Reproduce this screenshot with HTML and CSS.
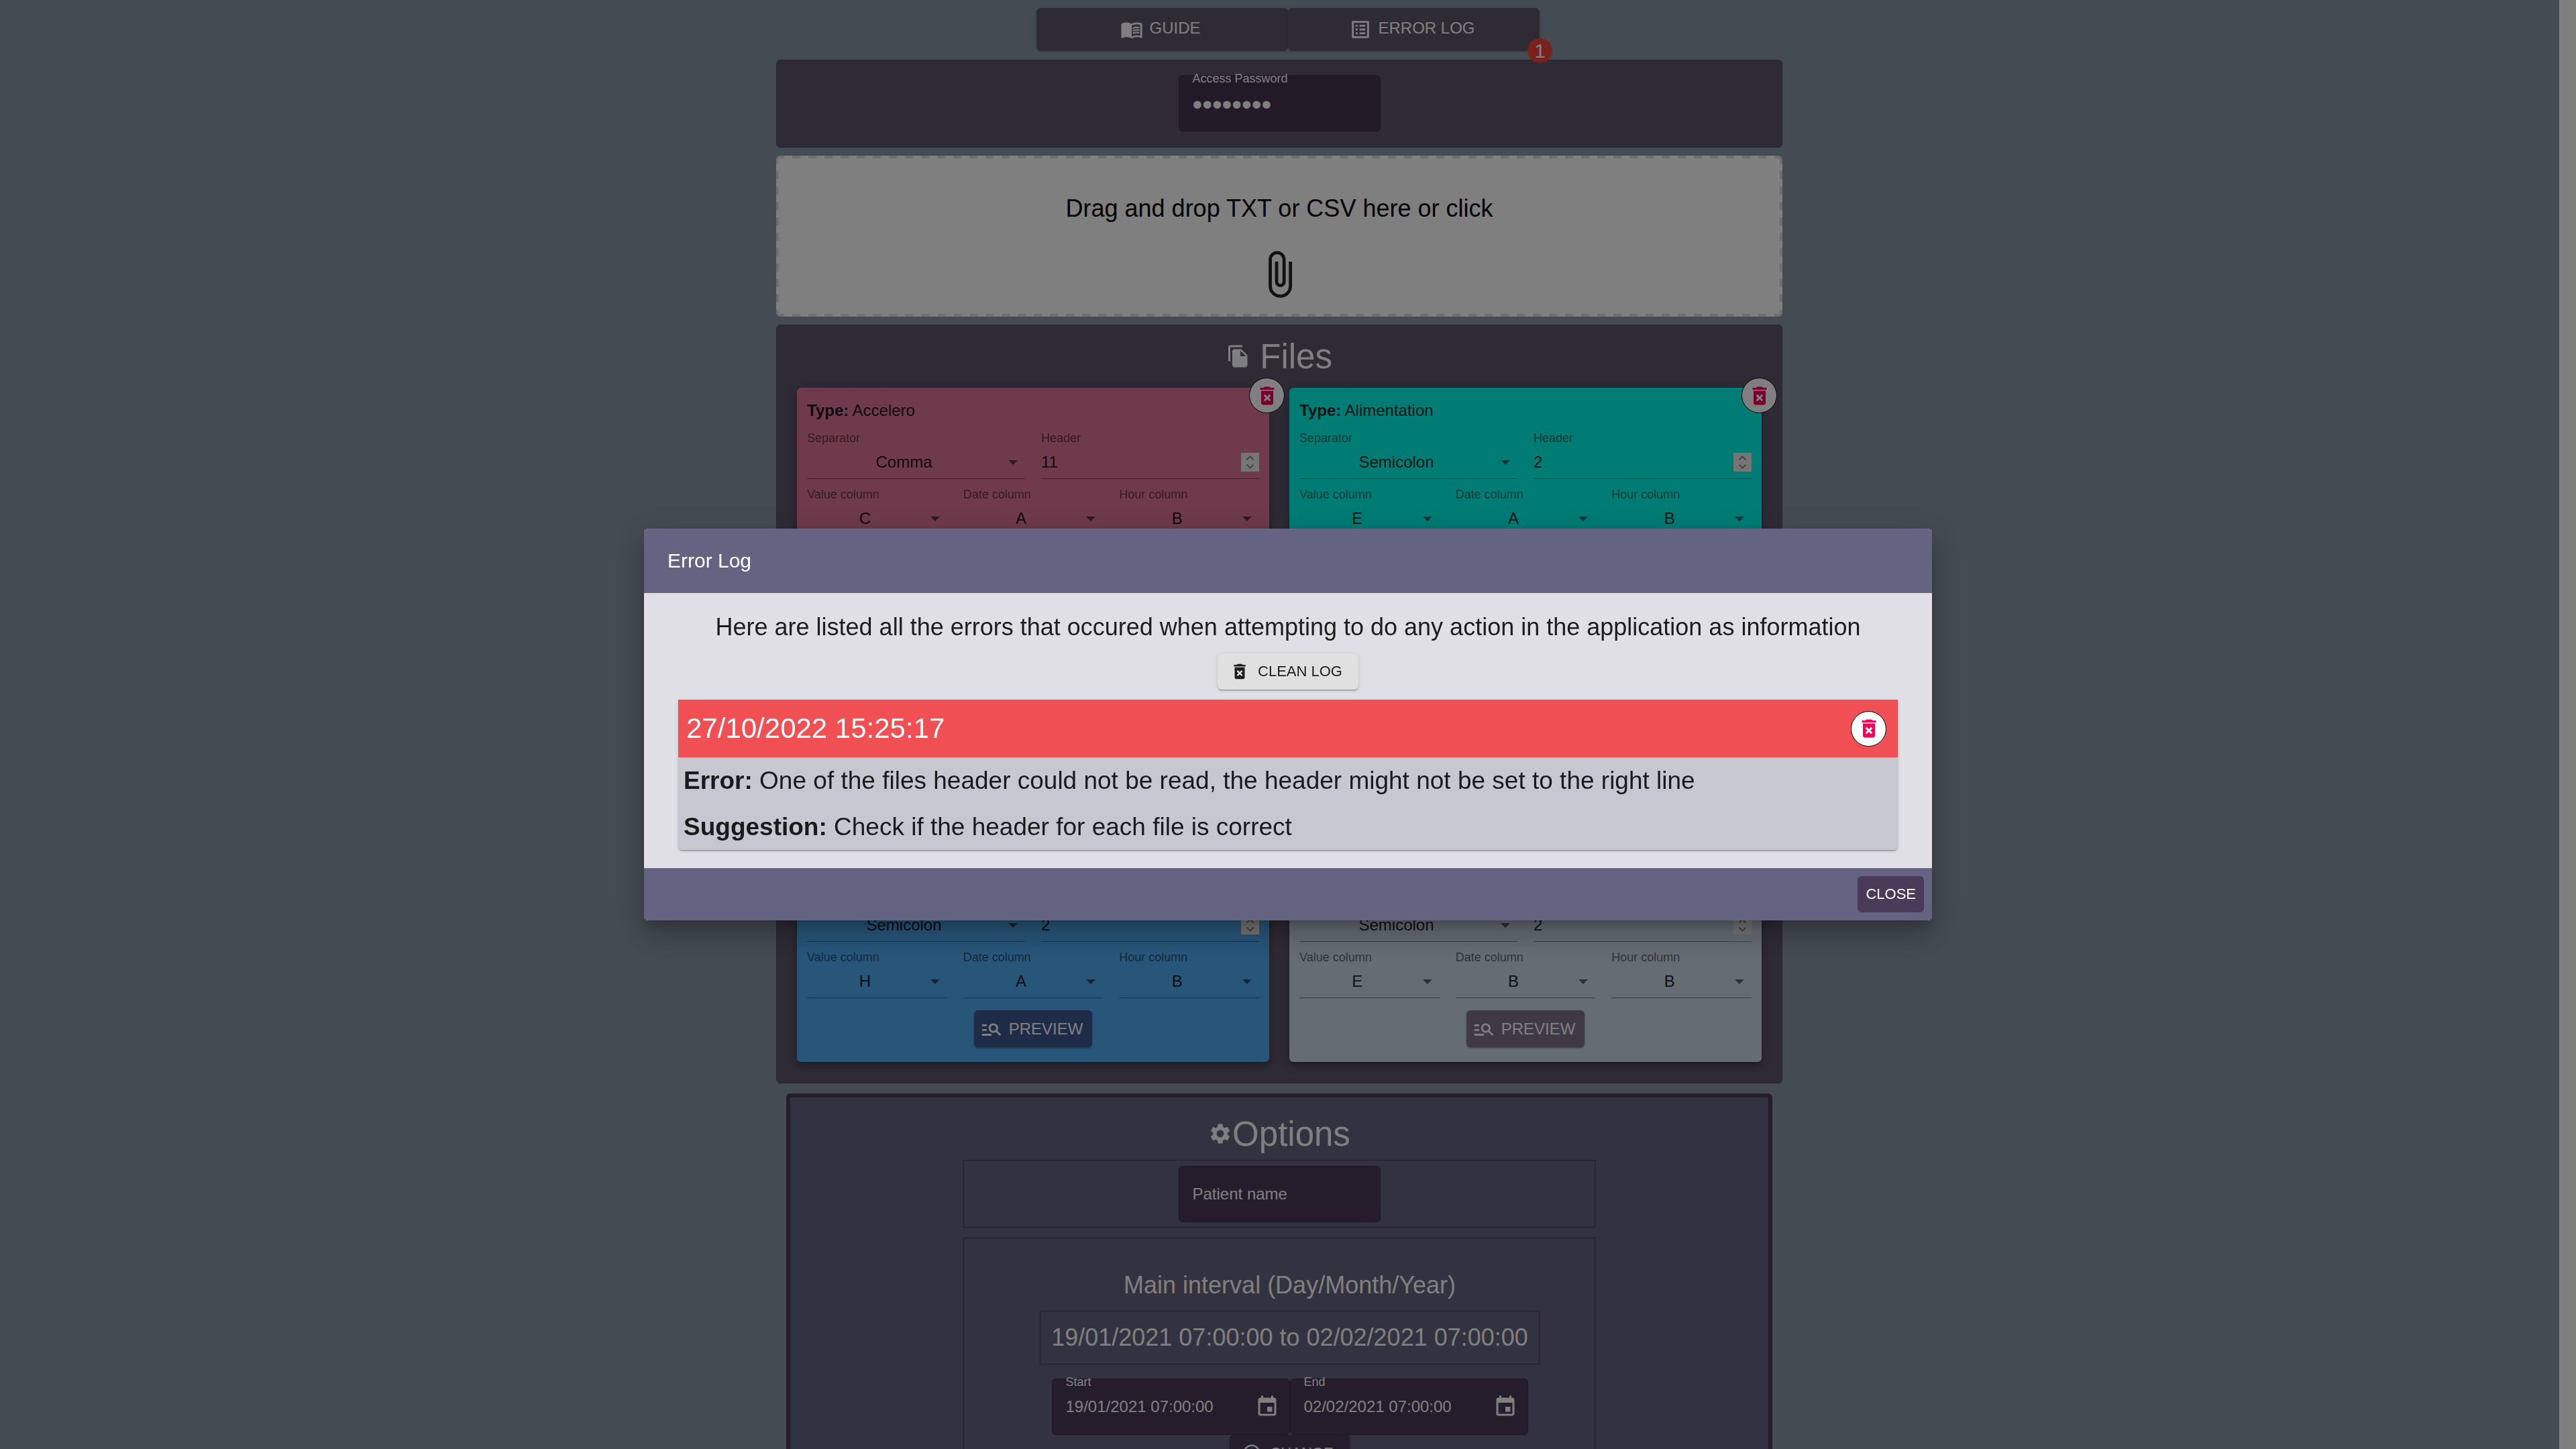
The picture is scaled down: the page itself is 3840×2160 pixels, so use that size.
FILE: index.html
```html
<!DOCTYPE html>
<html lang="en">
<head>
<meta charset="utf-8">
<title>Error Log</title>
<link rel="stylesheet" href="styles.css">
</head>
<body>
<svg class="sprite" aria-hidden="true">
  <symbol id="i-book" viewBox="0 0 24 24"><path d="M21 5c-1.11-.35-2.33-.5-3.5-.5-1.95 0-4.05.4-5.5 1.5-1.45-1.1-3.55-1.5-5.5-1.5S2.45 4.9 1 6v14.65c0 .25.25.5.5.5.1 0 .15-.05.25-.05C3.1 20.45 5.05 20 6.5 20c1.95 0 4.05.4 5.5 1.5 1.35-.85 3.8-1.5 5.5-1.5 1.65 0 3.35.3 4.75 1.05.1.05.15.05.25.05.25 0 .5-.25.5-.5V6c-.6-.45-1.25-.75-2-1zm0 13.5c-1.1-.35-2.3-.5-3.5-.5-1.7 0-4.15.65-5.5 1.5V8c1.35-.85 3.8-1.5 5.5-1.5 1.2 0 2.4.15 3.5.5v11.5z"/><path d="M17.5 10.5c.88 0 1.73.09 2.5.26V9.24c-.79-.15-1.64-.24-2.5-.24-1.7 0-3.24.29-4.5.83v1.66c1.13-.64 2.7-.99 4.5-.99zM13 12.49v1.66c1.13-.64 2.7-.99 4.5-.99.88 0 1.73.09 2.5.26V11.9c-.79-.15-1.64-.24-2.5-.24-1.7 0-3.24.3-4.5.83zm4.5 1.84c-1.7 0-3.24.29-4.5.83v1.66c1.13-.64 2.7-.99 4.5-.99.88 0 1.73.09 2.5.26v-1.52c-.79-.16-1.64-.24-2.5-.24z"/></symbol>
  <symbol id="i-list" viewBox="0 0 24 24"><path d="M19 5v14H5V5h14m1.1-2H3.9c-.5 0-.9.4-.9.9v16.2c0 .4.4.9.9.9h16.2c.4 0 .9-.5.9-.9V3.9c0-.5-.5-.9-.9-.9zM11 7h6v2h-6V7zm0 4h6v2h-6v-2zm0 4h6v2h-6zM7 7h2v2H7zm0 4h2v2H7zm0 4h2v2H7z"/></symbol>
  <symbol id="i-clip" viewBox="0 0 24 24"><path d="M16.5 6v11.5c0 2.21-1.79 4-4 4s-4-1.79-4-4V5c0-1.38 1.12-2.5 2.5-2.5s2.5 1.12 2.5 2.5v10.5c0 .55-.45 1-1 1s-1-.45-1-1V6H10v9.5c0 1.38 1.12 2.5 2.5 2.5s2.5-1.12 2.5-2.5V5c0-2.21-1.79-4-4-4S7 2.79 7 5v12.5c0 3.04 2.46 5.5 5.5 5.5s5.5-2.46 5.5-5.5V6h-1.5z"/></symbol>
  <symbol id="i-copy" viewBox="0 0 24 24"><path d="M16 1H4c-1.1 0-2 .9-2 2v14h2V3h12V1zm-1 4l6 6v10c0 1.1-.9 2-2 2H7.99C6.89 23 6 22.1 6 21l.01-14c0-1.1.89-2 1.99-2h7zm-1 7h5.5L14 6.5V12z"/></symbol>
  <symbol id="i-trash" viewBox="0 0 24 24"><path d="M6 19c0 1.1.9 2 2 2h8c1.1 0 2-.9 2-2V7H6v12zm2.46-7.12l1.41-1.41L12 12.59l2.12-2.12 1.41 1.41L13.41 14l2.12 2.12-1.41 1.41L12 15.41l-2.12 2.12-1.41-1.41L10.59 14l-2.13-2.12zM15.5 4l-1-1h-5l-1 1H5v2h14V4z"/></symbol>
  <symbol id="i-search" viewBox="0 0 24 24"><path d="M7 9H2V7h5v2zm0 3H2v2h5v-2zm13.59 7l-3.83-3.83c-.8.52-1.74.83-2.76.83-2.76 0-5-2.24-5-5s2.24-5 5-5 5 2.24 5 5c0 1.02-.31 1.96-.83 2.75L22 17.59 20.59 19zM17 11c0-1.65-1.35-3-3-3s-3 1.35-3 3 1.35 3 3 3 3-1.35 3-3zM2 19h10v-2H2v2z"/></symbol>
  <symbol id="i-gear" viewBox="0 0 24 24"><path d="M19.14 12.94c.04-.3.06-.61.06-.94 0-.32-.02-.64-.07-.94l2.03-1.58c.18-.14.23-.41.12-.61l-1.92-3.32c-.12-.22-.37-.29-.59-.22l-2.39.96c-.5-.38-1.03-.7-1.62-.94l-.36-2.54c-.04-.24-.24-.41-.48-.41h-3.84c-.24 0-.43.17-.47.41l-.36 2.54c-.59.24-1.13.57-1.62.94l-2.39-.96c-.22-.08-.47 0-.59.22L2.74 8.87c-.12.21-.08.47.12.61l2.03 1.58c-.05.3-.09.63-.09.94s.02.64.07.94l-2.03 1.58c-.18.14-.23.41-.12.61l1.92 3.32c.12.22.37.29.59.22l2.39-.96c.5.38 1.03.7 1.62.94l.36 2.54c.05.24.24.41.48.41h3.84c.24 0 .44-.17.47-.41l.36-2.54c.59-.24 1.13-.56 1.62-.94l2.39.96c.22.08.47 0 .59-.22l1.92-3.32c.12-.22.07-.47-.12-.61l-2.01-1.58zM12 15.6c-1.98 0-3.6-1.62-3.6-3.6s1.62-3.6 3.6-3.6 3.6 1.62 3.6 3.6-1.62 3.6-3.6 3.6z"/></symbol>
  <symbol id="i-event" viewBox="0 0 24 24"><path d="M17 12h-5v5h5v-5zM16 1v2H8V1H6v2H5c-1.11 0-1.99.9-1.99 2L3 19c0 1.1.89 2 2 2h14c1.1 0 2-.9 2-2V5c0-1.1-.9-2-2-2h-1V1h-2zm3 18H5V8h14v11z"/></symbol>
  <symbol id="i-clock" viewBox="0 0 24 24"><path d="M11.99 2C6.47 2 2 6.48 2 12s4.47 10 9.99 10C17.52 22 22 17.52 22 12S17.52 2 11.99 2zM12 20c-4.42 0-8-3.58-8-8s3.58-8 8-8 8 3.58 8 8-3.58 8-8 8zm.5-13H11v6l5.25 3.15.75-1.23-4.5-2.67z"/></symbol>
  <symbol id="i-spin" viewBox="0 0 27 28"><path d="M8.500 10.500l5-5 5 5M8.500 17.500l5 5 5-5" fill="none" stroke="currentColor" stroke-width="2"/></symbol>
</svg>

<div class="viewport">
  <main class="page">
    <nav class="toolbar">
      <button class="tool" type="button"><svg class="icon-m"><use href="#i-book"/></svg>GUIDE</button>
      <button class="tool" type="button"><svg class="icon-m"><use href="#i-list"/></svg>ERROR LOG<span class="badge">1</span></button>
    </nav>

    <section class="panel access">
      <label class="outlined">
        <span class="outlined-label">Access Password</span>
        <input class="password" type="password" value="password">
      </label>
    </section>

    <button class="dropzone" type="button">
      <span>Drag and drop TXT or CSV here or click</span>
      <svg class="icon-xl"><use href="#i-clip"/></svg>
    </button>

    <section class="panel files">
      <h1 class="heading"><svg class="icon-l"><use href="#i-copy"/></svg> Files</h1>
      <div class="cards">
        <article class="card pink">
          <button class="remove" type="button" aria-label="Remove file"><svg class="icon-l"><use href="#i-trash"/></svg></button>
          <p class="type"><b>Type:</b> Accelero</p>
          <div class="fields">
            <label class="field">Separator<span class="control drop"><select><option>Comma</option></select></span></label>
            <label class="field">Header<span class="control"><input type="number" value="11"><svg class="spin"><use href="#i-spin"/></svg></span></label>
          </div>
          <div class="fields">
            <label class="field">Value column<span class="control drop"><select><option>C</option></select></span></label>
            <label class="field">Date column<span class="control drop"><select><option>A</option></select></span></label>
            <label class="field">Hour column<span class="control drop"><select><option>B</option></select></span></label>
          </div>
          <button class="preview" type="button"><svg class="icon-m"><use href="#i-search"/></svg>PREVIEW</button>
        </article>
        <article class="card teal">
          <button class="remove" type="button" aria-label="Remove file"><svg class="icon-l"><use href="#i-trash"/></svg></button>
          <p class="type"><b>Type:</b> Alimentation</p>
          <div class="fields">
            <label class="field">Separator<span class="control drop"><select><option>Semicolon</option></select></span></label>
            <label class="field">Header<span class="control"><input type="number" value="2"><svg class="spin"><use href="#i-spin"/></svg></span></label>
          </div>
          <div class="fields">
            <label class="field">Value column<span class="control drop"><select><option>E</option></select></span></label>
            <label class="field">Date column<span class="control drop"><select><option>A</option></select></span></label>
            <label class="field">Hour column<span class="control drop"><select><option>B</option></select></span></label>
          </div>
          <button class="preview" type="button"><svg class="icon-m"><use href="#i-search"/></svg>PREVIEW</button>
        </article>
        <article class="card blue"></article>
        <article class="card grey"></article>
        <article class="card blue">
          <button class="remove" type="button" aria-label="Remove file"><svg class="icon-l"><use href="#i-trash"/></svg></button>
          <p class="type"><b>Type:</b></p>
          <div class="fields">
            <label class="field">Separator<span class="control drop"><select><option>Semicolon</option></select></span></label>
            <label class="field">Header<span class="control"><input type="number" value="2"><svg class="spin"><use href="#i-spin"/></svg></span></label>
          </div>
          <div class="fields">
            <label class="field">Value column<span class="control drop"><select><option>H</option></select></span></label>
            <label class="field">Date column<span class="control drop"><select><option>A</option></select></span></label>
            <label class="field">Hour column<span class="control drop"><select><option>B</option></select></span></label>
          </div>
          <button class="preview" type="button"><svg class="icon-m"><use href="#i-search"/></svg>PREVIEW</button>
        </article>
        <article class="card grey">
          <button class="remove" type="button" aria-label="Remove file"><svg class="icon-l"><use href="#i-trash"/></svg></button>
          <p class="type"><b>Type:</b></p>
          <div class="fields">
            <label class="field">Separator<span class="control drop"><select><option>Semicolon</option></select></span></label>
            <label class="field">Header<span class="control"><input type="number" value="2"><svg class="spin"><use href="#i-spin"/></svg></span></label>
          </div>
          <div class="fields">
            <label class="field">Value column<span class="control drop"><select><option>E</option></select></span></label>
            <label class="field">Date column<span class="control drop"><select><option>B</option></select></span></label>
            <label class="field">Hour column<span class="control drop"><select><option>B</option></select></span></label>
          </div>
          <button class="preview" type="button"><svg class="icon-m"><use href="#i-search"/></svg>PREVIEW</button>
        </article>
      </div>
    </section>

    <section class="options">
      <h1 class="heading"><svg class="icon-l"><use href="#i-gear"/></svg>Options</h1>
      <div class="box patient">
        <div class="outlined"><input type="text" placeholder="Patient name" aria-label="Patient name"></div>
      </div>
      <div class="box interval">
        <h2 class="subheading">Main interval (Day/Month/Year)</h2>
        <p class="range">19/01/2021 07:00:00 to 02/02/2021 07:00:00</p>
        <div class="dates">
          <label class="outlined"><span class="outlined-label">Start</span><input type="text" value="19/01/2021 07:00:00"><svg class="icon-l"><use href="#i-event"/></svg></label>
          <label class="outlined"><span class="outlined-label">End</span><input type="text" value="02/02/2021 07:00:00"><svg class="icon-l"><use href="#i-event"/></svg></label>
        </div>
        <button class="change" type="button"><svg class="icon-s"><use href="#i-clock"/></svg>CHANGE</button>
      </div>
    </section>
  </main>
  <div class="scrollbar"></div>
</div>

<div class="backdrop">
  <div class="dialog" role="dialog" aria-labelledby="dialog-title">
    <h2 class="dialog-title" id="dialog-title">Error Log</h2>
    <div class="dialog-body">
      <p class="intro">Here are listed all the errors that occured when attempting to do any action in the application as information</p>
      <button class="clean" type="button"><svg class="icon-s"><use href="#i-trash"/></svg>CLEAN LOG</button>
      <article class="entry">
        <header class="entry-head">
          <time>27/10/2022 15:25:17</time>
          <button class="round" type="button" aria-label="Delete entry"><svg class="icon-l"><use href="#i-trash"/></svg></button>
        </header>
        <div class="entry-body">
          <p><b>Error:</b> One of the files header could not be read, the header might not be set to the right line</p>
          <p><b>Suggestion:</b> Check if the header for each file is correct</p>
        </div>
      </article>
    </div>
    <footer class="dialog-foot"><button class="close" type="button">CLOSE</button></footer>
  </div>
</div>
</body>
</html>
```
FILE: styles.css
```css
:root {
  --plum: #4a3b58;
  --slate: #656382;
  --panel: #5d566b;
  --ink: rgba(0, 0, 0, .87);
  --raised: 0 3px 1px -2px rgba(0, 0, 0, .2), 0 2px 2px rgba(0, 0, 0, .14), 0 1px 5px rgba(0, 0, 0, .12);
}
* { box-sizing: border-box; }
body {
  margin: 0;
  font: 24px/28px "Liberation Sans", Arial, sans-serif;
  color: var(--ink);
  overflow: hidden;
}
h1, h2, p { margin: 0; font-weight: normal; }
button, input, select { font: inherit; color: inherit; border: 0; padding: 0; margin: 0; background: none; }
svg { fill: currentColor; flex: none; }
.sprite { display: none; }
.icon-s { width: 30px; height: 30px; }
.icon-m { width: 34px; height: 34px; }
.icon-l { width: 36px; height: 36px; }
.icon-xl { width: 76px; height: 76px; color: #222; }

.viewport { display: flex; height: 100vh; overflow: hidden; background: #8897a4; }
.page {
  flex: 1;
  display: flex;
  flex-direction: column;
  align-items: center;
  padding: 12px 1px 0 0;
}
.page > * { flex: none; }
.scrollbar { width: 25px; background: #fff; }

.toolbar { display: flex; width: 50%; max-width: 750px; margin: 0 0 14px 26px; }
.tool {
  position: relative;
  flex: 1;
  display: flex;
  align-items: center;
  justify-content: center;
  gap: 9px;
  height: 63px;
  padding-right: 5px;
  padding-bottom: 3px;
  border-radius: 6px;
  background: #5c566b;
  color: #fff;
  box-shadow: var(--raised);
}
.tool svg { margin-top: 4px; }
.badge {
  position: absolute;
  right: -19px;
  bottom: -19px;
  min-width: 37px;
  height: 37px;
  border-radius: 19px;
  background: #f44336;
  font-size: 30px;
  line-height: 37px;
  text-align: center;
  z-index: 1;
}

.panel {
  width: 90%;
  max-width: 1500px;
  margin-bottom: 12px;
  border: 1px solid #524b60;
  border-radius: 6px;
  background: var(--panel);
  color: #fff;
}
.access { display: flex; justify-content: center; padding: 22px 0 23px; }

.outlined {
  position: relative;
  display: flex;
  align-items: center;
  width: 301px;
  height: 84px;
  padding: 0 15px 0 20px;
  border: 1px solid #3a2e48;
  border-radius: 6px;
  background: var(--plum);
  color: #fff;
}
.outlined-label { position: absolute; top: -6px; left: 20px; font-size: 18px; line-height: 21px; }
.outlined input { flex: 1; min-width: 0; outline: 0; }
.outlined input::placeholder { color: #fff; opacity: 1; }
.access .outlined { background: #46344e; }
.outlined .password { padding-top: 4px; font-size: 42px; line-height: 48px; }

.dropzone {
  display: flex;
  flex-direction: column;
  align-items: center;
  gap: 39px;
  width: 90%;
  max-width: 1500px;
  margin-bottom: 12px;
  padding: 58px 0 25px;
  border-radius: 6px;
  color: #000;
  font-size: 36px;
  line-height: 42px;
  background:
    repeating-linear-gradient(90deg, #dfdfdf 0 12px, transparent 12px 24px) top / 100% 4px no-repeat,
    repeating-linear-gradient(90deg, #dfdfdf 0 12px, transparent 12px 24px) bottom / 100% 4px no-repeat,
    repeating-linear-gradient(#dfdfdf 0 12px, transparent 12px 23px) left / 4px 100% no-repeat,
    repeating-linear-gradient(#dfdfdf 0 12px, transparent 12px 23px) right / 4px 100% no-repeat,
    #fff;
}

.heading { font-size: 51px; line-height: 60px; text-align: center; }
.files { padding: 17px 30px 31px; margin-bottom: 15px; }
.cards {
  display: grid;
  grid-template-columns: 1fr 1fr;
  grid-auto-rows: 1fr;
  gap: 30px;
  margin-top: 16px;
}
.card {
  position: relative;
  display: flex;
  flex-direction: column;
  padding: 20px 15px 22px;
  border-radius: 6px;
  color: var(--ink);
  box-shadow: 0 5px 5px -3px rgba(0, 0, 0, .2), 0 8px 10px 1px rgba(0, 0, 0, .14), 0 3px 14px 2px rgba(0, 0, 0, .12);
}
.pink { background: #de7698; --button: #7c5872; }
.teal { background: #00f8ea; --button: #4a8ca0; }
.blue { background: #51acf2; --button: #3e598e; }
.grey { background: #cbd9e9; --button: #7c728a; }
.type { margin-bottom: 17px; }
.fields { display: grid; grid-auto-flow: column; grid-auto-columns: 1fr; gap: 24px; }
.fields + .fields { margin: 13px 0 18px; }
.field { display: block; font-size: 18px; line-height: 21px; color: rgba(0, 0, 0, .56); }
.control {
  display: flex;
  align-items: center;
  position: relative;
  height: 50px;
  border-bottom: 1px solid rgba(0, 0, 0, .42);
  font-size: 24px;
  line-height: 28px;
}
.control select, .control input { width: 100%; color: var(--ink); appearance: none; outline: 0; }
.control select { padding-right: 36px; text-align: center; text-align-last: center; }
.control input { appearance: textfield; }
.control input::-webkit-inner-spin-button { appearance: none; }
.drop::after {
  content: "";
  position: absolute;
  right: 11px;
  top: 22px;
  border: 7px solid transparent;
  border-top-color: rgba(0, 0, 0, .56);
  border-bottom: 0;
}
.spin { width: 27px; height: 28px; background: #eaeaea; color: #888; }
.preview {
  display: flex;
  align-items: center;
  align-self: center;
  gap: 9px;
  height: 55px;
  padding: 0 14px 0 9px;
  border-radius: 6px;
  background: var(--button);
  color: #fff;
  box-shadow: var(--raised);
}
.remove, .round {
  display: flex;
  align-items: center;
  justify-content: center;
  width: 53px;
  height: 53px;
  border: 1px solid #000;
  border-radius: 50%;
  background: #fff;
  color: #f50057;
}
.remove { position: absolute; top: -15px; right: -23px; z-index: 1; }

.options {
  width: 88%;
  max-width: 1470px;
  padding: 25px 0;
  border: 6px solid var(--plum);
  border-radius: 6px;
  background: #666580;
  color: #fff;
}
.box { display: flex; flex-direction: column; align-items: center; max-width: 942px; margin: 0 auto 15px; border: 1px solid var(--plum); }
.patient { margin-top: 8px; padding: 8px 0 7px; }
.interval { padding: 49px 0 30px 31px; }
.subheading { font-size: 36px; line-height: 42px; }
.range { margin: 17px 0 21px; padding: 18px 16px; border: 1px solid var(--plum); font-size: 36px; line-height: 42px; }
.dates { display: flex; }
.dates .outlined { width: 355px; }
.change, .clean { display: flex; align-items: center; gap: 12px; font-size: 22px; border-radius: 6px; box-shadow: var(--raised); }
.change { height: 54px; padding: 0 24px 0 18px; background: var(--plum); }

.backdrop {
  position: fixed;
  inset: 0;
  z-index: 10;
  display: grid;
  place-items: center;
  background: rgba(0, 0, 0, .5);
}
.dialog {
  width: 90%;
  max-width: 1920px;
  border-radius: 6px;
  overflow: hidden;
  background: #e0dfe5;
  box-shadow: 0 11px 15px -7px rgba(0, 0, 0, .2), 0 24px 38px 3px rgba(0, 0, 0, .14), 0 9px 46px 8px rgba(0, 0, 0, .12);
}
.dialog-title { padding: 30px 35px; background: var(--slate); color: #fff; font-size: 30px; line-height: 36px; }
.dialog-body { display: flex; flex-direction: column; align-items: center; padding: 30px 51px 27px; font-size: 36px; line-height: 42px; }
.clean { height: 54px; margin: 18px 0 15px; padding: 0 24px 0 18px; background: #e0e0e0; }
.entry { width: 100%; border-radius: 0 0 6px 6px; background: #c7c7d1; box-shadow: var(--raised); }
.entry-head {
  display: flex;
  align-items: center;
  justify-content: space-between;
  height: 86px;
  padding: 0 17px 0 12px;
  background: #f05053;
  color: #fff;
  font-size: 42px;
}
.entry-body { display: grid; gap: 27px; padding: 14px 8px 13px; font-size: 37px; }
.dialog-foot { display: flex; justify-content: flex-end; padding: 12px; background: var(--slate); }
.close { height: 54px; padding: 0 12px; border-radius: 6px; background: var(--plum); color: #fff; font-size: 22px; }
```
